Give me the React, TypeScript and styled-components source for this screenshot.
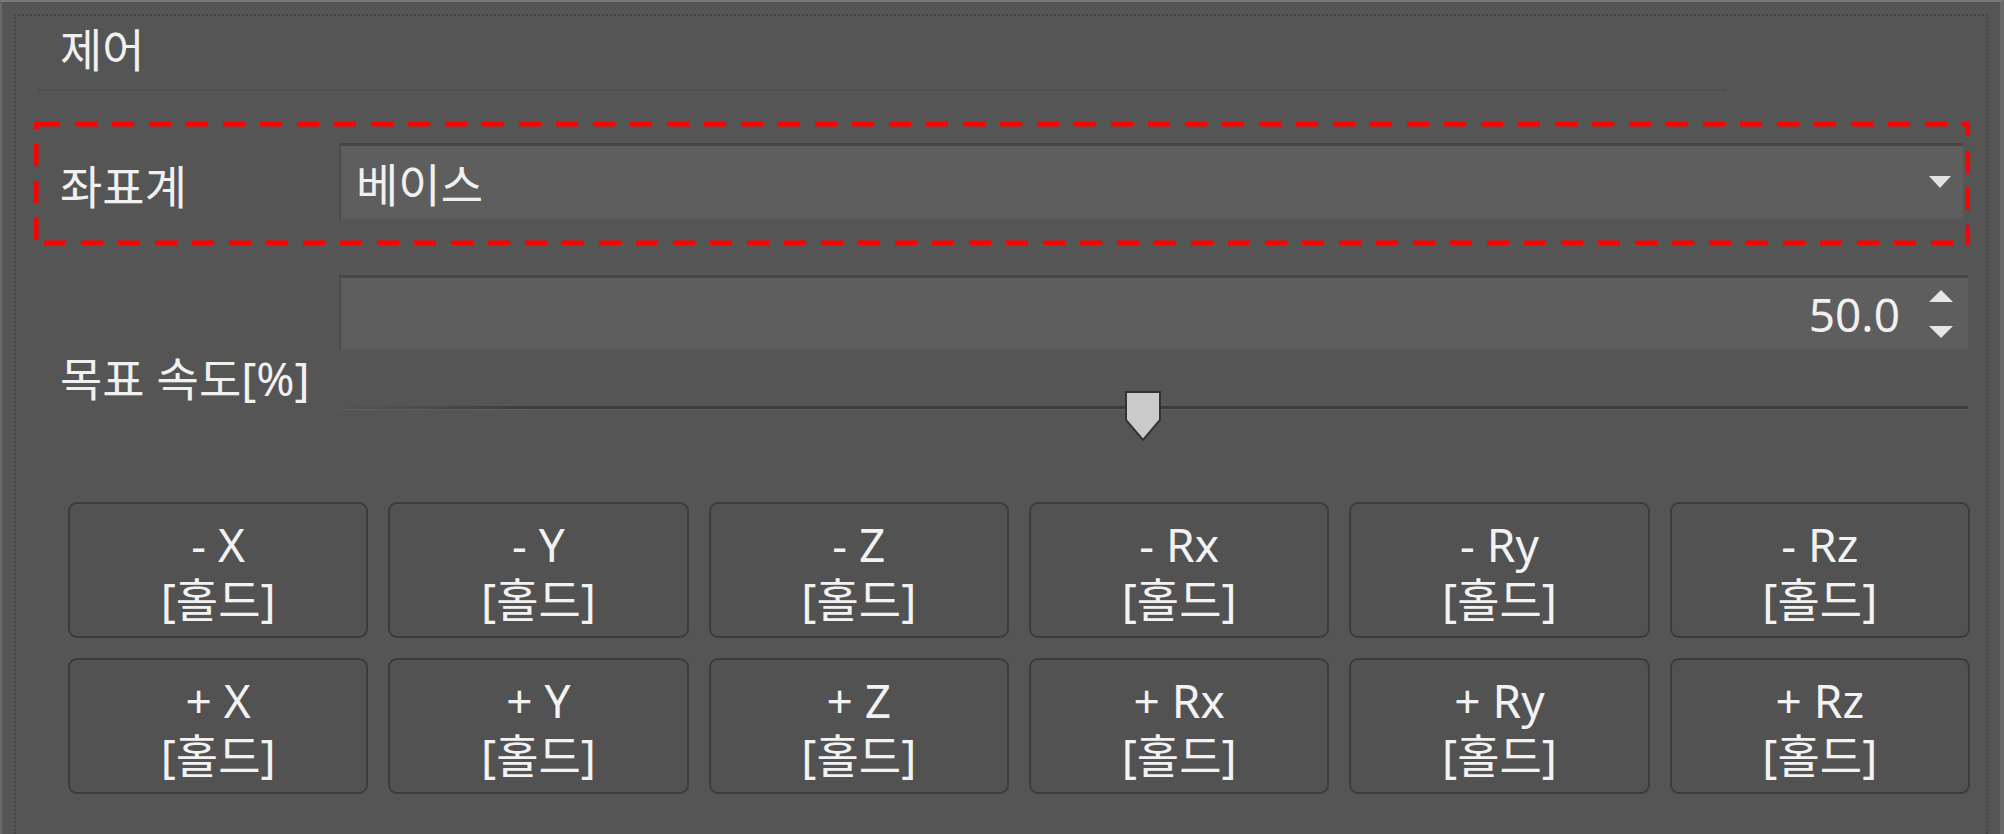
import React from "react";
import styled, { createGlobalStyle } from "styled-components";

const Global = createGlobalStyle`
  html, body { margin: 0; padding: 0; background: #555555; }
  body {
    font-family: "Noto Sans", "Noto Sans CJK KR", sans-serif;
    color: #f0f0f0;
  }
  * { box-sizing: border-box; }
`;

const Panel = styled.div`
  width: 2004px;
  height: 834px;
  overflow: hidden;
  background: #555555;
  border-top: 2px solid #7a7a7a;
  border-left: 2px solid #6a6a6a;
  border-right: 4px solid #6a6a6a;
  padding: 12px 12px 0 12px;
`;

const Frame = styled.div`
  height: 100%;
  border-top: 2px dotted #434343;
  border-left: 2px dotted #464646;
  border-right: 2px dotted #464646;
  display: flex;
  flex-direction: column;
`;

const Title = styled.div`
  margin: 10px 0 0 44px;
  font-size: 46px;
  line-height: 46px;
  height: 46px;
`;

const Separator = styled.div`
  margin: 17px 260px 0 22px;
  height: 2px;
  border-top: 2px dotted rgba(0, 0, 0, 0.1);
`;

const Form = styled.div`
  margin: 52px 18px 0 44px;
  display: grid;
  grid-template-columns: 279px 1fr;
`;

const Label = styled.div<{ $offset?: number }>`
  font-size: 46px;
  line-height: 50px;
  align-self: center;
  margin-top: ${(p) => p.$offset ?? 0}px;
  white-space: nowrap;
`;

const HighlightRow = styled.div`
  position: relative;
  grid-column: 1 / -1;
  display: grid;
  grid-template-columns: 279px 1fr;
`;

const Highlight = styled.svg`
  position: absolute;
  left: -26px;
  top: -21px;
  width: calc(100% + 28px);
  height: calc(100% + 46px);
  overflow: hidden;
  pointer-events: none;
`;

const Dropdown = styled.div`
  height: 77px;
  margin-right: 5px;
  background: #5e5e5e;
  border-top: 3px solid #474747;
  border-left: 2px solid #4b4b4b;
  border-bottom: 2px solid #575757;
  display: flex;
  align-items: center;
  justify-content: space-between;
  padding: 0 10px 0 15px;
  font-size: 46px;
`;

const SpeedControls = styled.div`
  margin-top: 55px;
  display: flex;
  flex-direction: column;
`;

const SpinBox = styled.div`
  height: 76px;
  background: #5e5e5e;
  border-top: 3px solid #474747;
  border-left: 2px solid #4b4b4b;
  border-bottom: 2px solid #575757;
  display: flex;
  align-items: center;
  justify-content: flex-end;
  padding-right: 14px;
  font-size: 46px;
`;

const SpinArrows = styled.div`
  margin-left: 28px;
  display: flex;
  flex-direction: column;
  gap: 22px;
`;

const SliderArea = styled.div`
  position: relative;
  height: 99px;
  margin-right: 21px;
`;

const Track = styled.div`
  position: absolute;
  left: 0;
  right: -21px;
  top: 55px;
  height: 4px;
  background: linear-gradient(to right, rgba(58, 58, 58, 0) 0, #3c3c3c 200px);
  border-bottom: 1px solid #5f5f5f;
`;

const Handle = styled.svg`
  position: absolute;
  top: 39px;
  width: 38px;
  height: 52px;
  transform: translateX(-50%);
`;

const ButtonGrid = styled.div`
  margin: 52px 16px 0 52px;
  display: grid;
  grid-template-columns: repeat(6, 1fr);
  grid-auto-rows: 136px;
  gap: 20px;
`;

const JogButton = styled.button`
  font-family: "Noto Sans", "Noto Sans CJK KR", sans-serif;
  font-size: 46px;
  line-height: 55px;
  color: #f2f2f2;
  background: #525252;
  border: 2px solid #3c3c3c;
  border-radius: 9px;
  padding: 4px 0 0 0;
  display: flex;
  flex-direction: column;
  align-items: center;
  justify-content: center;
  cursor: pointer;
`;

const Tri = ({ up }: { up?: boolean }) => (
  <svg width="26" height="14" viewBox="0 0 26 14">
    <path d={up ? "M13 1 L25 13 H1 Z" : "M1 1 H25 L13 13 Z"} fill="#e6e6e6" />
  </svg>
);

const axes = ["X", "Y", "Z", "Rx", "Ry", "Rz"];

export default function App() {
  const speed = 50;
  return (
    <Panel>
      <Global />
      <Frame>
        <Title>제어</Title>
        <Separator />
        <Form>
          <HighlightRow>
            <Highlight>
              <rect
                x="0"
                y="0"
                width="100%"
                height="100%"
                fill="none"
                stroke="#ff0000"
                strokeWidth="9"
                strokeDasharray="22 15"
                strokeDashoffset="-4"
              />
            </Highlight>
            <Label $offset={8}>좌표계</Label>
            <Dropdown>
              <span>베이스</span>
              <svg width="26" height="16" viewBox="0 0 26 16">
                <path d="M2 2 H24 L13 14 Z" fill="#e2e2e2" />
              </svg>
            </Dropdown>
          </HighlightRow>
          <Label $offset={86}>목표 속도[%]</Label>
          <SpeedControls>
            <SpinBox>
              <span>50.0</span>
              <SpinArrows>
                <Tri up />
                <Tri />
              </SpinArrows>
            </SpinBox>
            <SliderArea>
              <Track />
              <Handle viewBox="0 0 38 52" style={{ left: `${speed}%` }}>
                <path
                  d="M2 2 H36 V30 L19 50 L2 30 Z"
                  fill="#cacaca"
                  stroke="#333333"
                  strokeWidth="2"
                />
              </Handle>
            </SliderArea>
          </SpeedControls>
        </Form>
        <ButtonGrid>
          {["-", "+"].map((sign) =>
            axes.map((a) => (
              <JogButton key={sign + a}>
                <span>
                  {sign} {a}
                </span>
                <span>[홀드]</span>
              </JogButton>
            ))
          )}
        </ButtonGrid>
      </Frame>
    </Panel>
  );
}
